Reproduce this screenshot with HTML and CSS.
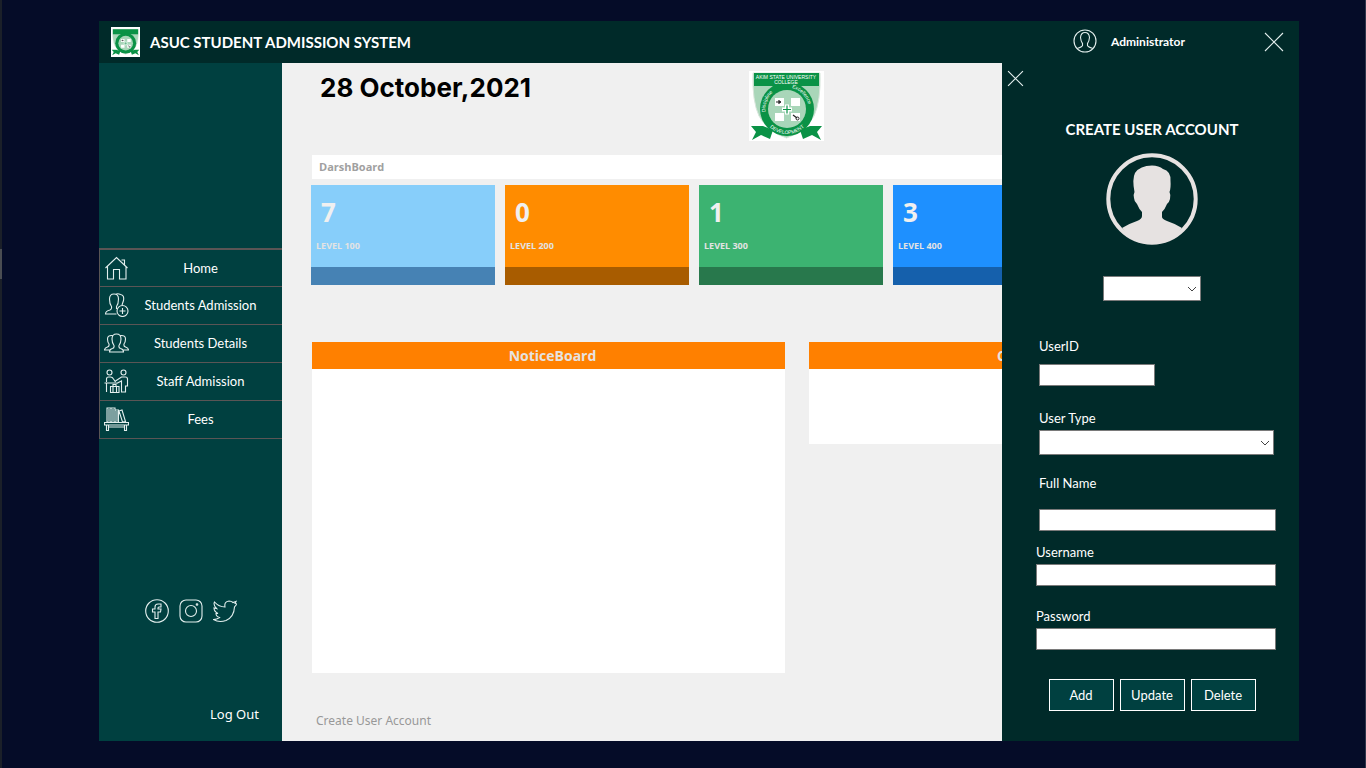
FILE: index.html
```html
<!DOCTYPE html>
<html lang="en">
<head>
<meta charset="utf-8">
<title>ASUC Student Admission System</title>
<link rel="stylesheet" href="styles.css">
</head>
<body>
<svg class="defs" aria-hidden="true">
  <symbol id="crest" viewBox="0 0 75 70">
    <rect width="75" height="70" fill="#fff"/>
    <path d="M4 2H71Q72 30 65 45Q56 61 37.500 67Q19 61 10 45Q3 30 4 2Z" fill="#a9d6b9" stroke="#d8e6dc"/>
    <path d="M5 2H70V15H5Z" fill="#0a9246"/>
    <path d="M2 55H14L24 59L21 68L12 64L3 69L7 61Z" fill="#0a9246"/>
    <path d="M73 55H61L51 59L54 68L63 64L72 69L68 61Z" fill="#0a9246"/>
    <circle cx="38" cy="38" r="27" fill="#0a9246"/>
    <circle cx="38" cy="38" r="19" fill="#a9d6b9"/>
    <path d="M26 27H35V35H26ZM42 27H51V35H42ZM26 42H35V50H26ZM42 42H51V50H42Z" fill="#fff"/>
    <path d="M33 38.500H43M38 33.500V43.500" stroke="#fff" stroke-width="4"/>
    <path d="M34 38.500H42M38 34.500V42.500" stroke="#0a9246" stroke-width="1.200"/>
    <path d="M27 31H32M30 29V33M44 44L48 47" stroke="#222" stroke-width="1.200"/>
    <circle cx="31" cy="31" r="1" fill="#222"/>
    <circle cx="48.500" cy="47.500" r="1.500" fill="none" stroke="#222"/>
  </symbol>
</svg>
<div class="edge"><span class="thumb"></span></div>
<div class="window">
  <header class="topbar">
    <svg class="logo" aria-hidden="true"><use href="#crest"/></svg>
    <h1 class="app-title">ASUC STUDENT ADMISSION SYSTEM</h1>
    <svg class="user-icon line" viewBox="0 0 24 24" aria-hidden="true"><circle cx="12" cy="12" r="11"/><path d="M4 19.500Q9 18 9.500 16.500V14.500Q8 13 7.500 8.500Q8 3.500 12 3.500T16.500 8.500Q16 13 14.500 14.500V16.500Q15 18 20 19.500"/></svg>
    <span class="user-name">Administrator</span>
    <button class="close" aria-label="Close window"><svg class="line" viewBox="0 0 20 20"><path d="M1 1L19 19M19 1L1 19"/></svg></button>
  </header>
  <div class="body">
    <aside class="sidebar">
      <nav class="nav">
        <a class="nav-item current" href="#"><svg class="line" viewBox="0 0 24 24"><path d="M1 12L12 1.500L23 12M3 10.500V23H9V13.500H15V23H21.500V10.500M17 4H20V9"/></svg><span>Home</span></a>
        <a class="nav-item" href="#"><svg class="line" viewBox="0 0 24 24"><path d="M12 21H1Q1 18 5.500 17Q7.500 16 7 13.500Q5 11 5 6Q5 1 9.500 1Q14 1 14 6Q14 11 12 13.500V16M11 1.500Q13 0 16 1.500Q20 2 19 7.500L17.500 12"/><circle cx="18" cy="18" r="5.500"/><path d="M15 18H21M18 15V21"/></svg><span>Students Admission</span></a>
        <a class="nav-item" href="#"><svg class="line" viewBox="0 0 24 24"><path d="M5 21Q5 18 8 17.500Q10 17 9.500 14.500Q7.500 12 7.500 8Q7.500 3 12 3Q16.500 3 16.500 8Q16.500 12 14.500 14.500Q14 17 16 17.500Q19 18 19 21ZM5 19H0Q0 17 3 16Q5 15.500 4.500 13Q3 11 3 8Q3 4 8 4.500M19 19H24Q24 17 21 16Q19 15.500 19.500 13Q21 11 21 8Q21 4 16 4.500"/></svg><span>Students Details</span></a>
        <a class="nav-item" href="#"><svg class="line" viewBox="0 0 24 24"><circle cx="5" cy="3.500" r="2.500"/><circle cx="19" cy="3.500" r="2.500"/><path d="M2 13V10Q2 8 4 8H6Q8 8 9 10L11 13M0 14H12M2 14V23M11 12L17 8H21Q23 8 23 10V17H21V23H17V12L12 14.500M6 17.500H14.500V23.500H6ZM8.500 17V15.500H11.500V17M8.500 18V23M12 18V23"/></svg><span>Staff Admission</span></a>
        <a class="nav-item" href="#"><svg class="line" viewBox="0 0 24 24"><path d="M2.500 1H6.500V15H2.500ZM6.500 1H10.500V15H6.500ZM10.500 3H14V15H10.500ZM14.500 4L17.500 3L21 14.500L18 15ZM0 15.500H24V18H0ZM2 18V23.500H4V18M20 18V23.500H22V18M4 20H20M4.500 2V14M8.500 2V14M12.500 4V14"/></svg><span>Fees</span></a>
      </nav>
      <div class="social">
        <a href="#" aria-label="Facebook"><svg class="line" viewBox="0 0 24 24"><circle cx="12" cy="12" r="11.300"/><path d="M10 19.500V13H7.500V10H10V8Q10 5 13 5H16V8H14Q13 8 13 9V10H16L15.500 13H13V19.500Z"/></svg></a>
        <a href="#" aria-label="Instagram"><svg class="line" viewBox="0 0 24 24"><rect x="1" y="1" width="22" height="22" rx="6"/><circle cx="12" cy="12" r="5.500"/><circle cx="18" cy="5.500" r="0.800"/></svg></a>
        <a href="#" aria-label="Twitter"><svg class="line" viewBox="0 0 24 24"><path d="M1.500 3Q6 8 12 8Q11 2.500 16 2Q18.500 2 20 3.500L23 2.500L22 4.500L24 5L21.500 8Q21 18 13 21.500Q6 24 0.500 20.500Q4 20.500 6.500 18.500Q3 17.500 3 14.500H5Q1 12.500 1 9L3.500 9.500Q0 6 1.500 3Z"/></svg></a>
      </div>
      <a class="logout" href="#">Log Out</a>
    </aside>
    <main class="main">
      <div class="main-head">
        <p class="date">28 October,2021</p>
        <svg class="crest" viewBox="0 0 75 70" role="img" aria-label="Akim State University College crest">
          <use href="#crest"/>
          <defs>
            <path id="arc-left" d="M16.500 41A21.500 21.500 0 0 1 36 16.500"/>
            <path id="arc-right" d="M43 17A21.500 21.500 0 0 1 59 43"/>
            <path id="arc-bottom" d="M13 38A25 25 0 0 0 63 38"/>
          </defs>
          <g class="crest-text">
            <text x="37" y="8" text-anchor="middle">AKIM STATE UNIVERSITY</text>
            <text x="37" y="13" text-anchor="middle">COLLEGE</text>
            <text><textPath href="#arc-left">Discipline</textPath></text>
            <text><textPath href="#arc-right">Excellence</textPath></text>
            <text><textPath href="#arc-bottom" startOffset="50%" text-anchor="middle">DEVELOPMENT</textPath></text>
          </g>
        </svg>
      </div>
      <h2 class="crumb">DarshBoard</h2>
      <div class="cards">
        <section class="card sky"><strong>7</strong><span>LEVEL 100</span></section>
        <section class="card orange"><strong>0</strong><span>LEVEL 200</span></section>
        <section class="card green"><strong>1</strong><span>LEVEL 300</span></section>
        <section class="card blue"><strong>3</strong><span>LEVEL 400</span></section>
      </div>
      <div class="boards">
        <section class="board notice"><h2>NoticeBoard</h2></section>
        <section class="board side"><h2>C</h2></section>
      </div>
      <a class="create" href="#">Create User Account</a>
    </main>
    <aside class="panel">
      <button class="close-panel" aria-label="Close panel"><svg class="line" viewBox="0 0 16 16"><path d="M1 1L15 15M15 1L1 15"/></svg></button>
      <form class="form">
        <h2 class="form-title">CREATE USER ACCOUNT</h2>
        <svg class="avatar" viewBox="0 0 92 92" aria-hidden="true"><circle cx="46" cy="46" r="43.700"/><path d="M16 75Q22 71 31 68Q36 66 36 63V59Q33 56 31 51Q28 48 28 45Q27 42 28.500 39Q26 26 29 20Q34 12.500 46 12.500Q53 12.500 57 16Q65 18 64.500 28Q65 35 63.500 39Q65 42 64 46Q63 50 61 51Q59 56 56 59V64Q56 66 61 68Q70 71 76 75Q65 90 46 90Q27 90 16 75Z"/></svg>
        <span class="select short"><select aria-label="Account"><option></option></select><svg viewBox="0 0 10 6" aria-hidden="true"><path d="M1 1L5 5L9 1"/></svg></span>
        <div class="fields inset">
          <label for="uid">UserID</label>
          <input class="uid" id="uid" type="text">
          <label class="type-label" for="utype">User Type</label>
          <span class="select wide"><select id="utype"><option></option></select><svg viewBox="0 0 10 6" aria-hidden="true"><path d="M1 1L5 5L9 1"/></svg></span>
          <label class="name-label" for="fname">Full Name</label>
          <input id="fname" type="text">
        </div>
        <div class="fields">
          <label class="login-label" for="uname">Username</label>
          <input id="uname" type="text">
          <label class="pass-label" for="pass">Password</label>
          <input id="pass" type="password">
        </div>
        <div class="actions">
          <button type="button">Add</button>
          <button type="button">Update</button>
          <button type="button">Delete</button>
        </div>
      </form>
    </aside>
  </div>
</div>
</body>
</html>
```
FILE: styles.css
```css
* { box-sizing: border-box; }

body {
  margin: 0;
  min-height: 100vh;
  display: flex;
  background: #050c28;
  border-right: 1px solid #30374c;
  color: #fff;
  font-family: Lato, "Century Gothic", sans-serif;
  font-size: 13px;
  line-height: 16px;
}

h1, h2, p { margin: 0; }
a { color: inherit; text-decoration: none; }
button { padding: 0; border: 0; background: none; color: inherit; font: inherit; }

.defs { position: absolute; width: 0; height: 0; }
.line { display: block; fill: none; stroke: #e3efee; stroke-width: 1.1; }

.edge { width: 2px; background: #1b2029; padding-top: 249px; }
.thumb { display: block; height: 30px; background: #4a4d52; }

.window {
  flex: 1;
  min-width: 0;
  margin: 21px 66px 27px 97px;
  display: flex;
  flex-direction: column;
  background: #002a29;
}

.topbar { display: flex; align-items: center; height: 42px; padding: 0 15px 0 12px; }
.logo { width: 29px; height: 30px; background: #fff; }
.app-title { flex: 1; padding-left: 10px; font-size: 15px; line-height: 20px; font-weight: 700; }
.user-icon { width: 24px; height: 24px; margin-bottom: 3px; }
.user-name { width: 167px; padding-left: 14px; font-size: 12px; font-weight: 700; }
.close svg { width: 20px; height: 20px; }

.body { flex: 1; display: flex; }

.sidebar { width: 183px; flex: none; background: #004040; display: flex; flex-direction: column; }
.nav { margin-top: 185px; border: solid #5a5555; border-width: 1px 0 0 1px; }
.nav-item { display: flex; align-items: center; height: 38px; padding: 0 10px 1px 4px; border-bottom: 1px solid #5a5555; }
.nav-item svg { width: 25px; height: 24px; }
.nav-item span { flex: 1; text-align: center; }
.current { border-top: 1px solid #5a5555; }
.social { display: flex; gap: 10px; margin: 160px 0 0 46px; }
.social svg { width: 24px; height: 24px; }
.logout { margin: auto 23px 19px auto; font-family: "Noto Sans", sans-serif; }

.main { flex: 1; min-width: 0; overflow: hidden; background: #f0f0f0; }
.main-head { display: flex; justify-content: space-between; height: 92px; padding: 8px 178px 0 38px; }
.date { color: #000; font-family: Inter, sans-serif; font-size: 26px; line-height: 34px; font-weight: 700; }
.crest { width: 75px; height: 70px; }
.crest-text { fill: #fff; font-family: "Liberation Sans", sans-serif; font-size: 5px; }
.crumb {
  margin-left: 30px;
  padding-left: 7px;
  background: #fff;
  color: #a0a0a0;
  font: 700 11px/24px "Open Sans", sans-serif;
}
.cards { display: grid; grid-template-columns: repeat(4, 184px); gap: 10px; padding: 6px 0 0 29px; }
.card { height: 100px; padding: 9px 5px; border-bottom: 18px solid; color: #f0f0f0; font-family: "Open Sans", sans-serif; }
.card strong { display: block; padding-left: 5px; font-size: 26px; line-height: 36px; }
.card span { display: block; margin-top: 8px; font-size: 9px; font-weight: 700; color: #e3e3e3; }
.sky { background: #87cefa; border-color: #4682b4; }
.orange { background: #ff8c00; border-color: #a85c00; }
.green { background: #3cb371; border-color: #28784c; }
.blue { background: #1e90ff; border-color: #1560ac; }

.boards { display: grid; grid-template-columns: 473px 473px; gap: 24px; align-items: start; padding: 57px 0 0 30px; }
.board { background: #fff; }
.board h2 { height: 27px; background: #ff8000; color: #e6e3e0; font: 700 14px/28px "Open Sans", sans-serif; }
.notice { min-height: 331px; }
.notice h2 { padding-left: 8px; text-align: center; }
.side { min-height: 102px; }
.side h2 { padding-left: 188px; }
.create { display: block; margin: 40px 0 0 34px; color: #989898; font: 12px/16px "Noto Sans", sans-serif; }

.panel { width: 297px; flex: none; padding-top: 7px; }
.close-panel { display: block; margin-left: 5px; }
.close-panel svg { width: 17px; height: 17px; }
.form { display: flex; flex-direction: column; align-items: center; padding: 32px 0 30px 3px; }
.form-title { font-size: 15px; line-height: 20px; }
.avatar { width: 92px; height: 92px; margin-top: 14px; fill: #e6e2e1; }
.avatar circle { fill: none; stroke: #e6e2e1; stroke-width: 4; }

.select { position: relative; display: block; height: 25px; }
.select select { appearance: none; display: block; width: 100%; height: 100%; border: 1px solid #7a7a7a; border-radius: 0; background: #fff; }
.select svg { position: absolute; right: 4px; top: 10px; width: 10px; height: 6px; fill: none; stroke: #444; pointer-events: none; }
.short { width: 98px; margin: 31px 0 37px; }
.fields { width: 100%; padding: 0 23px 0 31px; }
.fields label { display: block; }
.fields input { display: block; width: 100%; height: 22px; border: 1px solid #7a7a7a; background: #fff; padding: 0 4px; font: inherit; }
.inset { padding-left: 34px; margin-bottom: 13px; }
.fields .uid { width: 116px; margin-top: 10px; }
.fields .type-label { margin: 24px 0 4px; }
.wide { margin-right: 2px; }
.fields .name-label { margin: 20px 0 18px; }
.fields .login-label { margin-bottom: 4px; }
.fields .pass-label { margin: 22px 0 4px; }
.actions { display: flex; gap: 6px; margin-top: 29px; }
.actions button { width: 65px; height: 32px; border: 1px solid #fff; background: #004040; }
```
